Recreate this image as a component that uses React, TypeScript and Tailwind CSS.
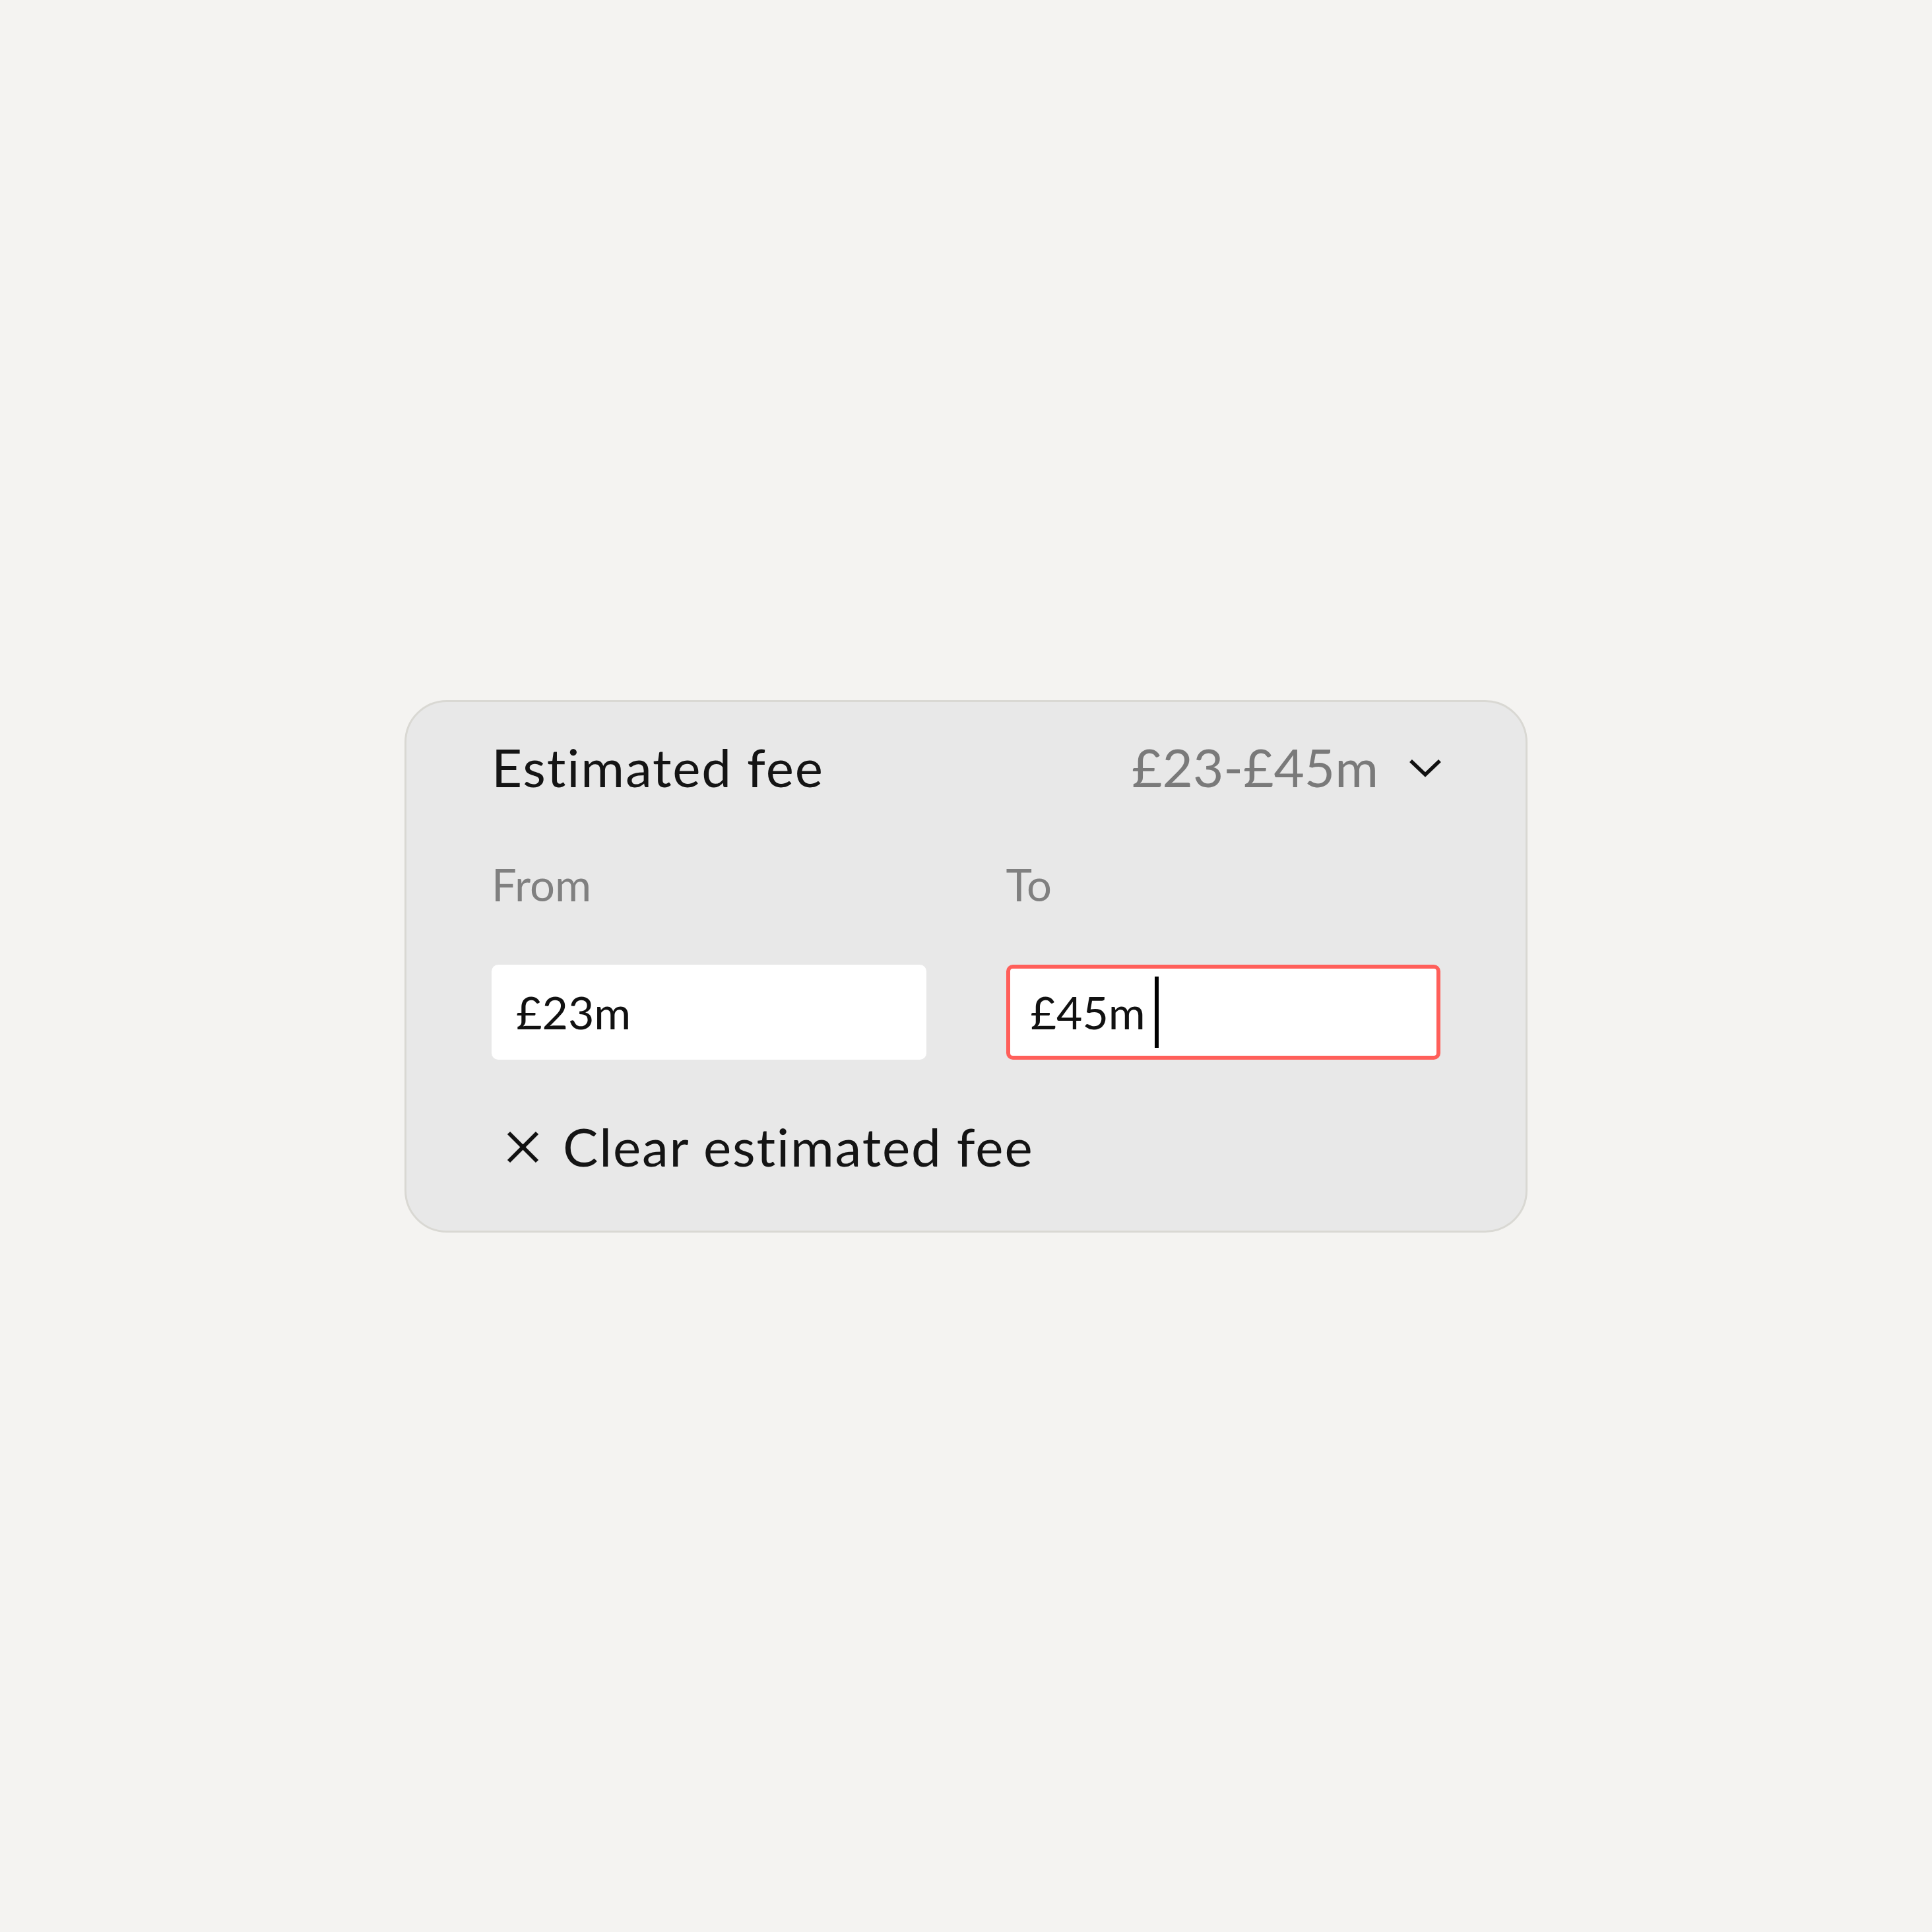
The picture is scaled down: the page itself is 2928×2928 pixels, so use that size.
export default function App() {
  return (
    <div className="min-h-screen w-full bg-[#f4f3f1] flex items-center justify-center font-['Lato',sans-serif]">
      <div className="w-[1702px] bg-[#e8e8e8] border-[3px] border-[#d9d8d3] rounded-[64px] px-[129px] pt-[58px] pb-[88px]">
        {/* header */}
        <div className="flex items-center justify-between">
          <h2 className="text-[80px] leading-none tracking-[1.8px] text-[#141414]">Estimated fee</h2>
          <button className="flex items-center gap-[46px] text-[80px] leading-none text-[#7a7a7a]">
            <span>£23-£45m</span>
            <svg width="50" height="28" viewBox="0 0 50 28" fill="none" className="mr-[-2px] mt-[4px]">
              <polyline points="3,3 25,24 47,3" stroke="#111" strokeWidth="5.5" strokeLinejoin="miter" />
            </svg>
          </button>
        </div>

        {/* labels + inputs */}
        <div className="grid grid-cols-2 gap-x-[121px] mt-[105px]">
          <label className="text-[67px] leading-none text-[#808080]">From</label>
          <label className="text-[67px] leading-none text-[#808080]">To</label>
          <div className="mt-[88px] h-[144px] bg-white rounded-[10px] border-[6px] border-transparent pl-[31px] flex items-center text-[68px] leading-none text-[#111]">
            £23m
          </div>
          <div className="mt-[88px] h-[144px] bg-white rounded-[10px] border-[6px] border-[#ff5f5a] pl-[31px] flex items-center text-[68px] leading-none text-[#111]">
            <span>£45m</span>
            <span className="ml-[14px] w-[6px] h-[108px] bg-black" />
          </div>
        </div>

        {/* clear */}
        <button className="mt-[91px] flex items-center gap-[36px] pl-[23px] text-[80px] leading-none tracking-[1.8px] text-[#141414]">
          <svg width="49" height="49" viewBox="0 0 49 49" fill="none" className="mt-[4px]">
            <line x1="3" y1="3" x2="46" y2="46" stroke="#111" strokeWidth="6" />
            <line x1="46" y1="3" x2="3" y2="46" stroke="#111" strokeWidth="6" />
          </svg>
          <span>Clear estimated fee</span>
        </button>
      </div>
    </div>
  )
}
